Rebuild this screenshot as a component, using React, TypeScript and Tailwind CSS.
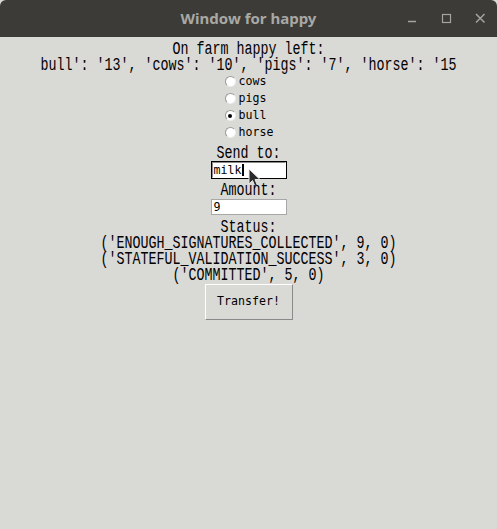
import React from "react";

const mono = { fontFamily: '"Liberation Mono", monospace' };
const small = { fontFamily: '"DejaVu Sans Mono", monospace' };

function BigLine({ children }: { children: React.ReactNode }) {
  return (
    <div className="h-[16px] leading-[16px] whitespace-nowrap text-center">
      <span className="inline-block origin-center scale-y-[1.4] text-[13.33px]" style={mono}>
        {children}
      </span>
    </div>
  );
}

function Radio({ label, checked }: { label: string; checked?: boolean }) {
  return (
    <div className="h-[17px] flex items-center gap-[3px]">
      <span className="w-[11px] h-[11px] rounded-full bg-white border border-t-[#9a9a9a] border-l-[#9a9a9a] border-r-[#ececec] border-b-[#ececec] flex items-center justify-center">
        {checked && <span className="w-[4px] h-[4px] rounded-full bg-black" />}
      </span>
      <span className="text-[11.6px] leading-[17px] text-black" style={small}>
        {label}
      </span>
    </div>
  );
}

export default function App() {
  return (
    <div className="w-[497px] h-[529px] bg-[#d9d9d6] flex flex-col overflow-hidden">
      {/* Title bar */}
      <div className="h-[37px] bg-[#3c3b37] rounded-t-[6px] relative flex items-center justify-center shrink-0">
        <span
          className="text-[15px] font-bold text-[#a8a8a4]"
          style={{ fontFamily: '"Noto Sans", "Open Sans", sans-serif' }}
        >
          Window for happy
        </span>
        <div className="absolute right-0 top-0 h-[37px] flex items-center">
          <svg width="34" height="37" viewBox="0 0 34 37">
            <line x1="13" y1="21.5" x2="21" y2="21.5" stroke="#a4a4a0" strokeWidth="1.5" />
          </svg>
          <svg width="34" height="37" viewBox="0 0 34 37">
            <rect x="13.5" y="14.5" width="8" height="8" fill="none" stroke="#a4a4a0" strokeWidth="1.2" />
          </svg>
          <svg width="34" height="37" viewBox="0 0 34 37">
            <path d="M13 14 L21.5 22.5 M21.5 14 L13 22.5" stroke="#a4a4a0" strokeWidth="1.5" />
          </svg>
        </div>
      </div>

      {/* Body */}
      <div className="flex flex-col items-center text-black">
        <div className="pt-[2px] pb-[2px] w-full">
          <BigLine>On farm happy left:</BigLine>
          <BigLine>bull': '13', 'cows': '10', 'pigs': '7', 'horse': '15</BigLine>
        </div>

        <div className="w-fit flex flex-col items-start pl-[1px]">
          <Radio label="cows" />
          <Radio label="pigs" />
          <Radio label="bull" checked />
          <Radio label="horse" />
        </div>

        <div className="pt-[2px] pb-[1px] w-full">
          <BigLine>Send to:</BigLine>
        </div>
        <div className="relative mt-[1px] w-[76px] h-[18px] border border-black bg-white">
          <div className="h-full border border-t-[#8a8a8a] border-l-[#8a8a8a] border-r-white border-b-white flex items-center pl-[1px]">
            <span className="text-[11.6px] leading-[14px]" style={small}>
              milk
            </span>
            <span className="w-[2px] h-[12px] bg-black ml-[1px]" />
          </div>
          <svg
            className="absolute left-[36px] top-[6px]"
            width="14"
            height="20"
            viewBox="0 0 14 20"
          >
            <path
              d="M1 1 L1 16 L4.5 12.5 L7 18.5 L9.5 17.5 L7 11.5 L12 11.5 Z"
              fill="#2a2a2a"
              stroke="#e8e8e8"
              strokeWidth="1"
              strokeLinejoin="round"
            />
          </svg>
        </div>

        <div className="pt-[1px] pb-[2px] w-full">
          <BigLine>Amount:</BigLine>
        </div>
        <div className="mt-[1px] w-[76px] h-[16px] border border-[#a8a8a8] bg-white flex items-center pl-[2px]">
          <span className="text-[11.6px] leading-[14px]" style={small}>
            9
          </span>
        </div>

        <div className="pt-[2px] pb-[2px] w-full">
          <BigLine>Status:</BigLine>
          <BigLine>('ENOUGH_SIGNATURES_COLLECTED', 9, 0)</BigLine>
          <BigLine>('STATEFUL_VALIDATION_SUCCESS', 3, 0)</BigLine>
          <BigLine>('COMMITTED', 5, 0)</BigLine>
        </div>

        <button className="mt-[1px] w-[88px] h-[36px] bg-[#d9d9d6] border border-t-white border-l-white border-r-[#8a8a8a] border-b-[#8a8a8a] flex items-center justify-center">
          <span className="text-[11.6px]" style={small}>
            Transfer!
          </span>
        </button>
      </div>
    </div>
  );
}
